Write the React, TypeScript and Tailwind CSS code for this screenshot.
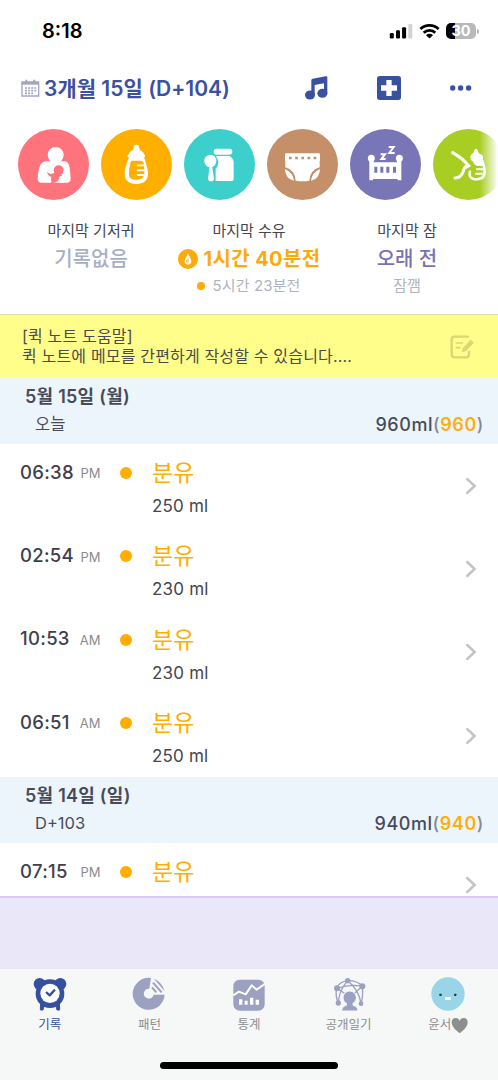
import React from "react";

interface Feed {
  time: string;
  period: string;
  amount?: string;
}

interface Day {
  date: string;
  label: string;
  total: string;
  feeds: Feed[];
}

const days: Day[] = [
  {
    date: "5월 15일 (월)",
    label: "오늘",
    total: "960",
    feeds: [
      { time: "06:38", period: "PM", amount: "250 ml" },
      { time: "02:54", period: "PM", amount: "230 ml" },
      { time: "10:53", period: "AM", amount: "230 ml" },
      { time: "06:51", period: "AM", amount: "250 ml" },
    ],
  },
  {
    date: "5월 14일 (일)",
    label: "D+103",
    total: "940",
    feeds: [{ time: "07:15", period: "PM" }],
  },
];

function StatusBar() {
  return (
    <div className="flex h-[62px] shrink-0 items-center justify-between pl-[42px] pr-[19px]">
      <span className="text-[20px] font-semibold leading-none text-black">8:18</span>
      <div className="flex items-center gap-[6px]">
        <svg width="24" height="16" viewBox="0 0 24 16">
          <rect x="0.8" y="10" width="4" height="5.5" rx="1.2" />
          <rect x="7" y="7.3" width="4" height="8.2" rx="1.2" />
          <rect x="13.1" y="4.2" width="4" height="11.3" rx="1.2" />
          <rect x="19.3" y="1" width="4" height="14.5" rx="1.2" fill="#d3d3d3" />
        </svg>
        <svg width="21" height="16" viewBox="0 0 21 16" fill="none" stroke="#000" strokeWidth="2.8">
          <path d="M1.4 6.1a13 13 0 0 1 18.2 0" />
          <path d="M4.7 9.7a8.3 8.3 0 0 1 11.6 0" />
          <path d="M7 12.2a5 5 0 0 1 7 0L10.5 15.6Z" fill="#000" stroke="none" />
        </svg>
        <div className="flex items-center gap-px">
          <div className="flex h-4 w-[30px] items-center justify-center rounded-[5px] bg-linear-to-r from-black from-30% to-[#b9b9b9] to-30% text-[14.5px] font-bold leading-none text-white">
            30
          </div>
          <div className="h-[5px] w-[2px] rounded-r-full bg-[#b9b9b9]" />
        </div>
      </div>
    </div>
  );
}

function Header() {
  return (
    <div className="flex h-[52px] shrink-0 items-center pl-[21px] pr-[26px] text-[#3a519f]">
      <svg width="19" height="18" viewBox="0 0 57 54" fill="none" stroke="#a3a5c2">
        <path d="M3 9h50v42H3Z" strokeWidth="4" />
        <path d="M2 13h52" strokeWidth="8" />
        <path d="M16 2v10M40 2v10" strokeWidth="6" />
        <path d="M12 27h34M12 35h34M12 43h25" strokeWidth="5" strokeDasharray="6 3.3" />
      </svg>
      <span className="ml-[4px] flex-1 whitespace-nowrap text-[21px] font-semibold leading-none tracking-[0.02px]">
        3개월 15일 (D+104)
      </span>
      <svg width="24" height="26" viewBox="0 0 72 78" fill="currentColor">
        <ellipse cx="15" cy="60" rx="15" ry="13.5" />
        <ellipse cx="52" cy="55" rx="15" ry="13.5" />
        <path d="M19 60V16q0-4 4-5l39-7q5-1 5 3v49H57V25l-28 5v30Z" />
      </svg>
      <svg className="ml-[48px]" width="24" height="24" viewBox="0 0 72 72">
        <rect width="72" height="72" rx="8" fill="currentColor" />
        <path d="M28 12h16v16h16v16H44v16H28V44H12V28h16Z" fill="#fff" />
      </svg>
      <svg className="ml-[48px]" width="23" height="6" viewBox="0 0 23 6" fill="currentColor">
        <circle cx="3.7" cy="3" r="2.7" />
        <circle cx="11.6" cy="3" r="2.7" />
        <circle cx="19.6" cy="3" r="2.7" />
      </svg>
    </div>
  );
}

function Circle({ className, children }: { className: string; children: React.ReactNode }) {
  return (
    <div className={`size-[71px] shrink-0 rounded-full ${className}`}>
      <svg className="size-full" viewBox="0 0 213 213" fill="#fff">
        {children}
      </svg>
    </div>
  );
}

function QuickActions() {
  return (
    <div className="relative shrink-0 overflow-hidden pt-[14.5px]">
      <div className="flex gap-3 pl-[18.3px]">
        <Circle className="bg-[#ff737d]">
          <circle cx="113" cy="78" r="24" />
          <path d="M59 149C60 125 65 97 84 97h58c15 2 15 35 16 53 0 8-5 11-12 11h-21l12-19q-14-14-29 3l-8-6-1 14q6 8-2 8H71q-12 0-12-12Z" />
          <circle cx="122" cy="124" r="15" fill="#ff737d" />
          <path d="M87 127q8 15 25 3l16 6q9 5-4 16l-8 9h-17q7-9 4-16-14-3-16-18Z" fill="#ff737d" />
          <path d="M103 161q20 1 22-19 12-2 10-14l6-8 5 28-8 13Z" />
        </Circle>
        <Circle className="bg-[#ffaf00]">
          <path d="M98 54q0-7 8-7t8 7q1 9 7 12 8 4 8 10 5 2 3 8H80q-2-6 3-8 0-6 8-10 6-3 7-12Z" />
          <path d="M84 83h45c3 13 12 32 12 50 0 22-12 32-35 32s-35-10-35-32c0-18 10-37 13-50Z" />
          <path
            d="M94 95h25q8 0 9 8c2 10 2 17 2 27 0 16-7 22-24 22s-23-6-22-20c0-11 3-20 4-29q1-8 6-8Z"
            fill="#ffaf00"
          />
          <path d="M110 109h18M110 124h20M110 138h20" stroke="#fff" strokeWidth="5.5" strokeLinecap="round" />
        </Circle>
        <Circle className="bg-[#3dcfcc]">
          <rect x="89" y="59" width="56" height="18" rx="9" />
          <path d="M99 81h38q12 8 12 20v49q0 6-6 6H95V119q9-9 8-23-2-8-7-13Z" />
          <ellipse cx="79" cy="96" rx="18" ry="19" />
          <path d="M77 110h7l6 39q-1 8-9 8t-9-8Z" />
        </Circle>
        <Circle className="bg-[#c48f69]">
          <rect x="54" y="73" width="105" height="24" rx="4" />
          <path d="M55 94h103v21q-29 8-31 40-21 3-41 0-2-32-31-40Z" />
          <path d="M54 120q24 11 27 35-26-5-27-35ZM159 120q-24 11-27 35 26-5 27-35Z" />
          <path d="M66 87h84" stroke="#c48f69" strokeWidth="8" strokeDasharray="8 10.5" />
        </Circle>
        <Circle className="bg-[#7976b7]">
          <circle cx="64" cy="88" r="10.5" />
          <circle cx="148" cy="88" r="10.5" />
          <path d="M58 93h13v7h70V93h13v61h-11v-4H69v4H58Z" />
          <path d="M73 113h9v18h-9zM91 113h9v18h-9zM109 113h9v18h-9zM129 113h9v18h-9z" fill="#7976b7" />
          <path d="M92 76h13L94 90h13M116 54h15l-13 18h16" stroke="#fff" strokeWidth="6" fill="none" />
        </Circle>
        <Circle className="bg-[#a8ce23]">
          <path
            d="M59 71q34 20 46 38-11 2-14 18-7 20-25 20"
            fill="none"
            stroke="#fff"
            strokeWidth="9"
            strokeLinecap="round"
            strokeLinejoin="round"
          />
          <path d="M99 99l16 12-16 9Z" />
          <path d="M124 63q7-9 11 2 0 8 9 11 10 5 5 17l-38-6q1-12 11-16Z" />
          <path
            d="M117 91l31 5q12 35 3 47-8 10-29 7-16-4-11-22"
            fill="none"
            stroke="#fff"
            strokeWidth="8"
            strokeLinecap="round"
          />
          <path d="M115 90l32 5v12h-22Z" />
          <path d="M130 108h18M129 121h21M127 134h22" stroke="#fff" strokeWidth="6" />
        </Circle>
      </div>
      <div className="absolute inset-y-0 right-0 w-[18px] bg-linear-to-r from-white/0 to-white" />
    </div>
  );
}

function Summary() {
  return (
    <div className="flex h-[114.5px] shrink-0 px-3 pt-[20.5px] text-center whitespace-nowrap">
      <div className="w-[158px]">
        <div className="text-[15px] leading-[21px] text-[#45454f]">마지막 기저귀</div>
        <div className="mt-[2px] text-[20px] font-medium leading-[32px] text-[#a8afc4]">기록없음</div>
      </div>
      <div className="w-[158px]">
        <div className="text-[15px] leading-[21px] text-[#45454f]">마지막 수유</div>
        <div className="mt-[2px] flex items-center justify-center gap-[6px] text-[20px] font-bold leading-[32px] tracking-[0.35px] text-[#ffaa0b]">
          <svg width="20" height="20" viewBox="0 0 60 60">
            <circle cx="30" cy="30" r="30" fill="#ffaa0b" />
            <path d="M30 12q3 9 8 17 6 17-8 18-14-1-8-18 5-8 8-17Z" fill="#fff" />
            <path d="M30 29v12M26 34v5" stroke="#ffaa0b" strokeWidth="3" />
          </svg>
          <span>1시간 40분전</span>
        </div>
        <div className="flex items-center justify-center gap-[7px] text-[15px] leading-[22px] tracking-[0.15px] text-[#afb4c1]">
          <span className="size-2 rounded-full bg-[#ffaa0b]" />
          <span>5시간 23분전</span>
        </div>
      </div>
      <div className="w-[158px]">
        <div className="text-[15px] leading-[21px] text-[#45454f]">마지막 잠</div>
        <div className="mt-[2px] text-[20px] font-medium leading-[32px] text-[#7872b5]">오래 전</div>
        <div className="text-[15px] leading-[22px] text-[#afb4c1]">잠깸</div>
      </div>
    </div>
  );
}

function QuickNote() {
  return (
    <div className="flex h-[64px] shrink-0 items-center justify-between border-t border-[#d9dcab] bg-[#fffe8a] pl-[22px] pr-[24px]">
      <div className="whitespace-nowrap pb-px text-[16px] leading-[20px] tracking-[0.17px] text-[#4b4b4b]">
        <div>[퀵 노트 도움말]</div>
        <div>퀵 노트에 메모를 간편하게 작성할 수 있습니다....</div>
      </div>
      <svg width="24" height="24" viewBox="0 0 72 72" fill="none" stroke="#d8d675" strokeWidth="7">
        <path d="M54 5H14Q5 5 5 14v44q0 9 9 9h34q9 0 9-9V50" strokeLinecap="round" />
        <path d="M17 24h22M17 38h14" strokeWidth="5" />
        <path d="M67 19L45 42" strokeWidth="13" />
        <path d="M39 36l12 11-15 5Z" fill="#d8d675" stroke="none" />
      </svg>
    </div>
  );
}

function DayHeader({ day }: { day: Day }) {
  return (
    <div className="flex h-[66px] shrink-0 items-end justify-between bg-[#edf5fc] pl-[25px] pr-[14px] text-[#474b59]">
      <div className="flex h-full flex-col pt-[6px]">
        <span className="text-[18px] font-semibold leading-[26px] tracking-[0.25px]">{day.date}</span>
        <span className="pl-[10px] text-[16.5px] leading-[28px]">{day.label}</span>
      </div>
      <span className="pb-[6px] text-[18px] font-medium leading-[26px] tracking-[0.55px]">
        {day.total}ml<span className="text-[#858b96]">(</span>
        <span className="font-semibold text-[#ffaf0d]">{day.total}</span>
        <span className="text-[#858b96]">)</span>
      </span>
    </div>
  );
}

function FeedRow({ feed }: { feed: Feed }) {
  return (
    <div className="flex h-[83.3px] shrink-0 pl-[20px] pr-[21px]">
      <div className="flex h-[57px] w-[100px] items-center">
        <span className="w-[54px] text-[18.5px] font-medium tracking-[0.3px] text-[#3f404d]">{feed.time}</span>
        <span className="w-[26.5px] pt-[3px] text-right text-[13px] text-[#8b8b8f]">{feed.period}</span>
      </div>
      <div className="flex h-[58px] w-[32px] items-center">
        <span className="size-3 rounded-full bg-[#ffae00]" />
      </div>
      <div className="flex-1 pt-[13px]">
        <div className="text-[23px] leading-[32px] text-[#ffae00]">분유</div>
        {feed.amount && (
          <div className="mt-[5px] text-[17px] leading-[24px] tracking-[0.2px] text-[#45464e]">{feed.amount}</div>
        )}
      </div>
      <svg className="self-center" width="12" height="18" viewBox="0 0 12 18" fill="none" stroke="#c4c4c6" strokeWidth="2.5" strokeLinecap="round">
        <path d="M2.2 2l7.4 7-7.4 7" />
      </svg>
    </div>
  );
}

interface TabProps {
  label: React.ReactNode;
  active?: boolean;
  children: React.ReactNode;
}

function Tab({ label, active, children }: TabProps) {
  return (
    <div className={`flex flex-1 flex-col items-center ${active ? "text-[#3650a0]" : "text-[#8e8e8e]"}`}>
      <svg width="34" height="34" viewBox="0 0 102 102">
        {children}
      </svg>
      <span className="mt-[2px] flex items-center whitespace-nowrap text-[12.5px] leading-[24px]">{label}</span>
    </div>
  );
}

function TabBar() {
  return (
    <div className="h-[111px] shrink-0 bg-[#f6f7f7]">
      <div className="flex h-[93px] pt-[8px]">
        <Tab label="기록" active>
          <g fill="#3650a0">
            <circle cx="20" cy="21" r="18" />
            <circle cx="82" cy="21" r="18" />
            <circle cx="51" cy="50" r="43" />
            <path d="M23 76l11 6-4 17h-8ZM79 76l-11 6 4 17h8Z" stroke="#3650a0" strokeWidth="3" strokeLinejoin="round" />
          </g>
          <circle cx="51" cy="49" r="29" fill="#fff" />
          <path d="M41 47l9 8 14-15" fill="none" stroke="#3650a0" strokeWidth="7" strokeLinecap="round" strokeLinejoin="round" />
        </Tab>
        <Tab label="패턴">
          <path
            d="M57 3A48 48 0 1 0 98 53H65A15 15 0 1 1 52 35Z"
            fill="#9ca1c1"
          />
          <path d="M66 5Q90 14 98 43Z" fill="#9ca1c1" />
          <path d="M63 17l26 29M60 31l13 15" stroke="#9ca1c1" strokeWidth="6" />
          <path d="M66 11l30 34" stroke="#f6f7f7" strokeWidth="3" />
        </Tab>
        <Tab label="통계">
          <rect x="4" y="8" width="94" height="93" rx="19" fill="#9ca1c1" />
          <path d="M4 55l17-11 20 8 18-27 15 13 24-17" fill="none" stroke="#fff" strokeWidth="6" strokeLinejoin="round" />
          <path d="M21 67h10v16H21zM38 71h9v12h-9zM54 62h10v21H54zM71 68h10v15H71z" fill="#fff" />
        </Tab>
        <Tab label="공개일기">
          <g fill="none" stroke="#9ca1c1" strokeWidth="4">
            <path d="M47 11Q22 14 14 34q-5 22 5 44M47 11q31 0 44 17 3 31-4 52" />
            <path d="M47 11Q20 42 19 78M47 11q35 28 40 69M15 34q42-14 76-6M15 34l26 17M91 28L66 50" />
          </g>
          <g fill="#9ca1c1">
            <circle cx="47" cy="11" r="8" />
            <circle cx="15" cy="34" r="9" />
            <circle cx="91" cy="28" r="9" />
            <circle cx="19" cy="78" r="8" />
            <circle cx="87" cy="80" r="7" />
          </g>
          <g fill="#9ca1c1" stroke="#f6f7f7" strokeWidth="3">
            <path d="M43 76h20v9q15 4 15 17H29q0-13 14-17Z" />
            <circle cx="53" cy="62" r="20" />
          </g>
          <path d="M45 74h16v12H45Z" fill="#9ca1c1" />
        </Tab>
        <Tab
          label={
            <>
              윤서
              <svg width="17" height="17" viewBox="0 0 51 51" fill="#8e8e8e">
                <path d="M26 49Q2 30 2 17 2 3 14 3q9 0 12 9Q29 3 38 3q12 0 12 14 0 13-24 32Z" />
              </svg>
            </>
          }
        >
          <circle cx="51" cy="51" r="50" fill="#98d5e8" />
          <rect x="25" y="50" width="7" height="7" rx="2" fill="#333" />
          <rect x="69" y="50" width="7" height="7" rx="2" fill="#333" />
          <rect x="42" y="60" width="17" height="9" rx="1" fill="#fff" />
        </Tab>
      </div>
      <div className="mx-auto h-[7px] w-[178px] rounded-full bg-black" />
    </div>
  );
}

export default function App() {
  return (
    <div className="flex h-[1080px] w-[498px] flex-col overflow-hidden bg-white font-['Inter','Noto_Sans_CJK_KR',sans-serif]">
      <StatusBar />
      <Header />
      <QuickActions />
      <Summary />
      <QuickNote />
      <div className="flex h-[518px] shrink-0 flex-col overflow-hidden">
        {days.map((day) => (
          <React.Fragment key={day.date}>
            <DayHeader day={day} />
            {day.feeds.map((feed) => (
              <FeedRow key={feed.time} feed={feed} />
            ))}
          </React.Fragment>
        ))}
      </div>
      <div className="min-h-0 flex-1 border-t-2 border-[#dac8f7] bg-[#eae8f8]" />
      <TabBar />
    </div>
  );
}
